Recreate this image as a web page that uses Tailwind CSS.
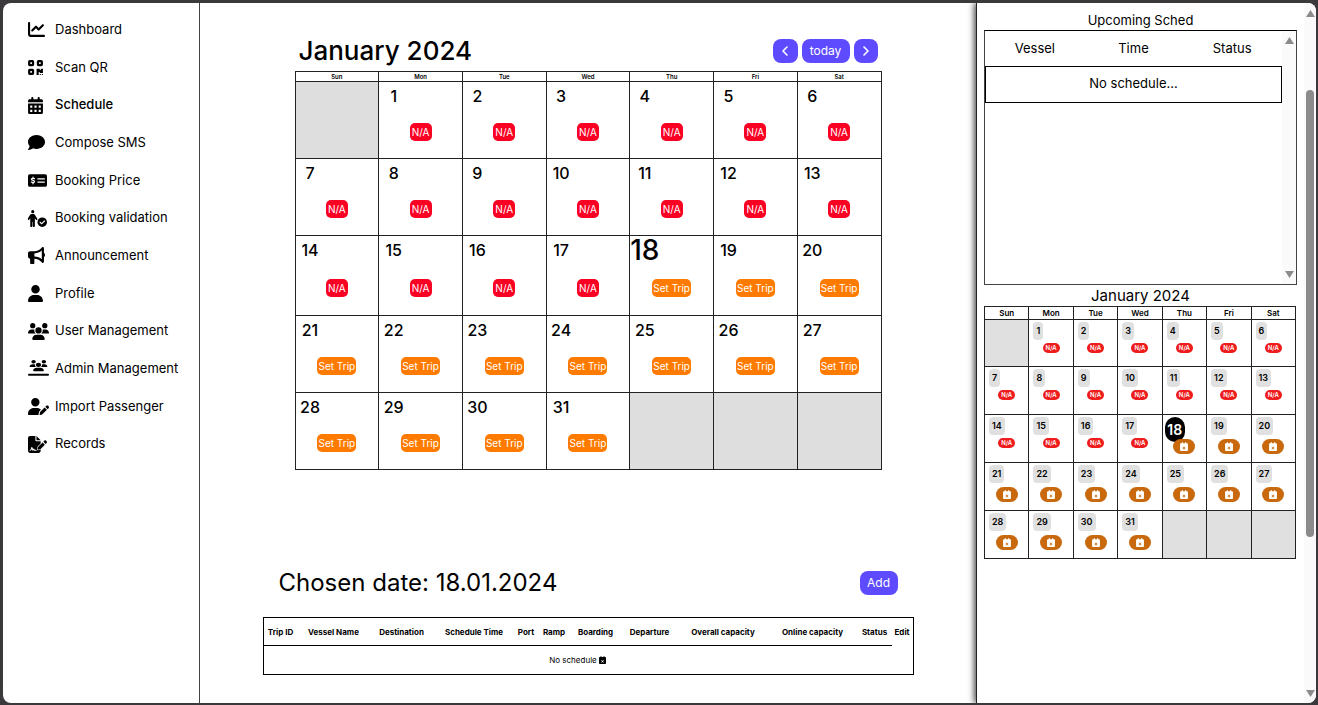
<!DOCTYPE html>
<html lang="en">
<head>
<meta charset="utf-8">
<meta name="viewport" content="width=device-width, initial-scale=1">
<title>Schedule</title>
<script src="https://cdn.jsdelivr.net/npm/@tailwindcss/browser@4"></script>
</head>
<body class="bg-[#3b393b] font-[Inter,'Noto_Sans',sans-serif] text-black">
<svg class="hidden" aria-hidden="true">
  <symbol id="cal-x" viewBox="0 0 448 512"><path fill-rule="evenodd" d="M128 0c17.700 0 32 14.300 32 32V64H288V32c0-17.700 14.300-32 32-32s32 14.300 32 32V64h48c26.500 0 48 21.500 48 48v352c0 26.500-21.500 48-48 48H48c-26.500 0-48-21.500-48-48V112C0 85.500 21.500 64 48 64H96V32c0-17.700 14.300-32 32-32zM170 260L140 290L194 344L140 398L170 428L224 374L278 428L308 398L254 344L308 290L278 260L224 314Z"/></symbol>
</svg>
<div class="flex min-h-screen flex-col pt-[3px] pr-[2px] pb-[2px] pl-[3px]">
<div class="flex grow overflow-hidden rounded-lg bg-white">

  <nav class="w-[197px] shrink-0 border-r border-[#444] pt-2 pl-[25px] text-[13px]">
    <div class="grid h-[452px] auto-rows-fr">
      <a href="#" class="flex items-center"><span class="w-[27px]"><svg class="h-[17px] w-[17px]" viewBox="0 0 512 512"><path d="M64 64c0-17.700-14.300-32-32-32S0 46.300 0 64V400c0 44.200 35.800 80 80 80H480c17.700 0 32-14.300 32-32s-14.300-32-32-32H80c-8.800 0-16-7.200-16-16V64zm406.600 86.600c12.500-12.500 12.500-32.800 0-45.300s-32.800-12.500-45.300 0L320 210.700l-57.400-57.400c-12.500-12.500-32.800-12.500-45.300 0l-112 112c-12.500 12.500-12.500 32.800 0 45.300s32.800 12.500 45.300 0L240 221.300l57.400 57.400c12.500 12.500 32.800 12.500 45.300 0l128-128z"/></svg></span>Dashboard</a>
      <a href="#" class="flex items-center"><span class="w-[27px]"><svg class="h-[17px] w-[15px]" viewBox="0 0 448 512"><g fill="none" stroke="#000" stroke-width="68"><rect x="34" y="66" width="116" height="116" rx="16"/><rect x="298" y="66" width="116" height="116" rx="16"/><rect x="34" y="330" width="116" height="116" rx="16"/></g><path d="M256 296h96v32h32v-32h64v128h-96v-32h-32v88h-64zM352 448h32v32h-32zM416 448h32v32h-32z"/></svg></span>Scan QR</a>
      <a href="#" aria-current="page" class="flex items-center font-medium"><span class="w-[27px]"><svg class="h-[17px] w-[15px]" viewBox="0 0 448 512"><path fill-rule="evenodd" d="M128 0c17.700 0 32 14.300 32 32V64H288V32c0-17.700 14.300-32 32-32s32 14.300 32 32V64h48c26.500 0 48 21.500 48 48v48H0V112C0 85.500 21.500 64 48 64H96V32c0-17.700 14.300-32 32-32zM0 192H448V464c0 26.500-21.500 48-48 48H48c-26.500 0-48-21.500-48-48V192zM64 256v64h64v-64zM192 256v64h64v-64zM320 256v64h64v-64zM64 384v64h64v-64zM192 384v64h64v-64zM320 384v64h64v-64z"/></svg></span>Schedule</a>
      <a href="#" class="flex items-center"><span class="w-[27px]"><svg class="h-[17px] w-[17px]" viewBox="0 0 512 512"><path d="M512 240c0 114.900-114.600 208-256 208c-37.100 0-72.300-6.400-104.100-17.900c-11.900 8.700-31.300 20.600-54.300 30.600C73.600 471.100 44.700 480 16 480c-6.500 0-12.300-3.900-14.800-9.900c-2.500-6-1.100-12.800 3.400-17.400l.3-.3c1.300-1.400 3.300-3.500 6.200-7.100c4.100-5 9.600-12.400 15.200-21.600c10-16.600 19.500-38.400 21.400-62.900C17.700 326.800 0 285.100 0 240C0 125.100 114.600 32 256 32s256 93.100 256 208z"/></svg></span>Compose SMS</a>
      <a href="#" class="flex items-center"><span class="w-[27px]"><svg class="h-[17px] w-[19px]" viewBox="0 0 576 512"><rect y="64" width="576" height="384" rx="56"/><g fill="none" stroke="#fff" stroke-width="38" stroke-linecap="round"><path d="M300 208h196M300 304h196"/><path d="M194 200c-24-12-88-16-90 20c-2 42 94 24 94 70c0 36-66 34-96 14M152 156v28M152 328v28"/></g></svg></span>Booking Price</a>
      <a href="#" class="flex items-center"><span class="w-[27px]"><svg class="h-[17px] w-[19px]" viewBox="0 0 576 512"><circle cx="144" cy="48" r="48"/><path d="M144 120c42 0 60 12 78 42l60 98c10 18 4 32-8 40s-30 6-40-10l-26-42v232c0 18-12 32-30 32s-32-14-32-32V352h-14v128c0 18-14 32-32 32s-32-14-32-32V248l-26 42c-10 14-26 18-40 10s-18-26-8-42l56-94c20-32 44-44 94-44z"/><circle cx="432" cy="368" r="144"/><path d="M368 370l46 46 84-84" fill="none" stroke="#fff" stroke-width="34" stroke-linecap="round"/></svg></span>Booking validation</a>
      <a href="#" class="flex items-center"><span class="w-[27px]"><svg class="h-[17px] w-[17px]" viewBox="0 0 512 512"><path d="M480 32c0-12.900-7.800-24.600-19.800-29.600s-25.700-2.200-34.900 6.900L381.700 53c-48 48-113.100 75-181 75H192 160 64c-35.300 0-64 28.700-64 64v96c0 35.300 28.700 64 64 64l0 128c0 17.700 14.300 32 32 32h64c17.700 0 32-14.300 32-32V352l8.700 0c67.900 0 133 27 181 75l43.600 43.600c9.200 9.200 22.900 11.900 34.900 6.900s19.800-16.600 19.800-29.600V300.400c18.600-8.800 32-32.500 32-60.400s-13.400-51.600-32-60.400V32zm-64 76.700V240 371.300C357.200 317.800 280.500 288 200.700 288H192V192h8.700c79.800 0 156.500-29.800 215.300-83.300z"/></svg></span>Announcement</a>
      <a href="#" class="flex items-center"><span class="w-[27px]"><svg class="h-[17px] w-[15px]" viewBox="0 0 448 512"><path d="M224 256A128 128 0 1 0 224 0a128 128 0 1 0 0 256zm-45.700 48C79.800 304 0 383.800 0 482.300C0 498.700 13.300 512 29.700 512H418.300c16.400 0 29.700-13.300 29.700-29.700C448 383.800 368.200 304 269.700 304H178.300z"/></svg></span>Profile</a>
      <a href="#" class="flex items-center"><span class="w-[27px]"><svg class="h-[17px] w-[21px]" viewBox="0 0 640 512"><path id="people" d="M144 0a80 80 0 1 1 0 160A80 80 0 1 1 144 0zM512 0a80 80 0 1 1 0 160A80 80 0 1 1 512 0zM0 298.700C0 239.800 47.800 192 106.700 192h42.700c15.900 0 31 3.500 44.600 9.700c-1.300 7.200-1.900 14.700-1.900 22.300c0 38.200 16.800 72.500 43.300 96H21.300C9.600 320 0 310.400 0 298.700zM405.300 320c26-23.500 42.700-57.800 42.700-96c0-7.600-.7-15-1.900-22.300c13.600-6.300 28.700-9.700 44.600-9.700h42.700C592.200 192 640 239.800 640 298.700c0 11.800-9.600 21.300-21.300 21.300H405.300zM224 224a96 96 0 1 1 192 0 96 96 0 1 1 -192 0zM128 485.300C128 411.700 187.700 352 261.300 352H378.700C452.300 352 512 411.700 512 485.300c0 14.700-11.900 26.700-26.700 26.700H154.700c-14.700 0-26.700-11.900-26.700-26.700z"/></svg></span>User Management</a>
      <a href="#" class="flex items-center"><span class="w-[27px]"><svg class="h-[17px] w-[21px]" viewBox="0 0 640 512"><use href="#people" transform="translate(48 0) scale(.85 .66)"/><rect y="416" width="640" height="60" rx="30"/></svg></span>Admin Management</a>
      <a href="#" class="flex items-center"><span class="w-[27px]"><svg class="h-[17px] w-[21px]" viewBox="0 0 640 512"><path d="M224 256A128 128 0 1 0 224 0a128 128 0 1 0 0 256zm-45.700 48C79.800 304 0 383.800 0 482.300C0 498.700 13.300 512 29.700 512H322.800c-3.100-8.800-3.700-18.400-1.400-27.800l15-60.100c2.800-11.300 8.600-21.500 16.800-29.700l40.300-40.300c-32.100-31-75.700-50.100-123.900-50.100H178.300zm435.500-68.300c-15.600-15.600-40.900-15.600-56.600 0l-29.400 29.400 71 71 29.400-29.400c15.600-15.600 15.600-40.900 0-56.600l-14.400-14.400zM375.900 417c-4.100 4.100-7 9.200-8.400 14.900l-15 60.100c-1.400 5.500 .2 11.200 4.200 15.200s9.700 5.600 15.200 4.200l60.100-15c5.600-1.400 10.800-4.300 14.900-8.400L576.100 358.700l-71-71L375.900 417z"/></svg></span>Import Passenger</a>
      <a href="#" class="flex items-center"><span class="w-[27px]"><svg class="h-[17px] w-[19px]" viewBox="0 0 576 512"><path d="M64 0C28.700 0 0 28.700 0 64V448c0 35.300 28.700 64 64 64H320c35.300 0 64-28.700 64-64V160H256c-17.700 0-32-14.300-32-32V0zM256 0V128H384z"/><path d="M64 432c22 0 28-8 36-34l16-50 34 84 24-38 22 38h50" fill="none" stroke="#fff" stroke-width="32" stroke-linecap="round" stroke-linejoin="round"/><path d="M549.800 139.700l14.400 14.400c15.600 15.600 15.600 40.900 0 56.600l-29.400 29.400-71-71 29.400-29.400c15.600-15.600 40.900-15.600 56.600 0zM311.900 321L441.100 191.800l71 71L382.900 391.900c-4.100 4.100-9.200 7-14.900 8.400l-60.100 15c-5.500 1.400-11.200-.2-15.200-4.200s-5.600-9.700-4.200-15.200l15-60.100c1.400-5.600 4.300-10.800 8.400-14.900z" stroke="#fff" stroke-width="32" paint-order="stroke"/></svg></span>Records</a>
    </div>
  </nav>

  <main class="min-w-0 flex-1 pt-9">
    <section class="mx-auto w-full max-w-[587px]">
      <div class="flex h-8 items-center justify-between px-1 pb-2">
        <h1 class="text-[26px] leading-8 font-medium">January 2024</h1>
        <div class="flex gap-1 text-[12px] text-white">
          <button aria-label="Previous month" class="flex h-6 w-[25px] items-center justify-center rounded-lg bg-[#5e4bff]"><svg class="h-[10px] w-[6px]" viewBox="0 0 6 10" fill="none" stroke="currentColor" stroke-width="1.600" stroke-linecap="round" stroke-linejoin="round"><path d="M5 1L1 5l4 4"/></svg></button>
          <button class="h-6 w-12 rounded-lg bg-[#5e4bff]">today</button>
          <button aria-label="Next month" class="flex h-6 w-[24px] items-center justify-center rounded-lg bg-[#5e4bff]"><svg class="h-[10px] w-[6px]" viewBox="0 0 6 10" fill="none" stroke="currentColor" stroke-width="1.600" stroke-linecap="round" stroke-linejoin="round"><path d="M1 1l4 4-4 4"/></svg></button>
        </div>
      </div>
      <table id="month" class="w-full table-fixed border-collapse"></table>
    </section>

    <section class="mx-auto mt-[97px] w-full max-w-[651px]">
      <div class="flex items-center justify-between px-4">
        <h2 class="text-[24px] leading-8">Chosen date: 18.01.2024</h2>
        <button class="h-6 w-[38px] rounded-lg bg-[#5e4bff] text-[12px] text-white">Add</button>
      </div>
      <table class="mt-[18px] w-full table-fixed border-separate border-spacing-0 border border-black text-center text-[8px] whitespace-nowrap">
        <colgroup><col class="w-[34px]"><col class="w-[72px]"><col class="w-[64px]"><col class="w-[81px]"><col class="w-[23px]"><col class="w-[33px]"><col class="w-[50px]"><col class="w-[58px]"><col class="w-[89px]"><col class="w-[90px]"><col class="w-[34px]"><col></colgroup>
        <thead><tr class="h-7 font-semibold">
          <th class="border-b border-black">Trip ID</th><th class="border-b border-black">Vessel Name</th><th class="border-b border-black">Destination</th><th class="border-b border-black">Schedule Time</th><th class="border-b border-black">Port</th><th class="border-b border-black">Ramp</th><th class="border-b border-black">Boarding</th><th class="border-b border-black">Departure</th><th class="border-b border-black">Overall capacity</th><th class="border-b border-black">Online capacity</th><th class="border-b border-black">Status</th><th>Edit</th>
        </tr></thead>
        <tbody><tr class="h-7"><td colspan="11"><span class="inline-flex items-center gap-[2px]">No schedule <svg class="h-2 w-[7px]"><use href="#cal-x"/></svg></span></td><td></td></tr></tbody>
      </table>
    </section>
  </main>

  <aside class="flex w-[340px] shrink-0 border-l border-[#222] shadow-[-2px_0_6px_0px_rgba(0,0,0,0.7)]">
    <div class="min-w-0 flex-1 pt-2 pl-[7px]">
      <div class="w-[313px]">
        <h2 class="text-center text-[13px] leading-[19px]">Upcoming Sched</h2>
        <div class="flex h-[255px] border border-[#444] border-t-black">
          <div class="flex-1">
            <table class="w-full table-fixed border-collapse text-center text-[13px]">
              <thead><tr class="h-[35px]"><th class="font-normal">Vessel</th><th class="font-normal">Time</th><th class="font-normal">Status</th></tr></thead>
              <tbody><tr class="h-[36px]"><td colspan="3" class="border border-black">No schedule...</td></tr></tbody>
            </table>
          </div>
          <div class="flex w-[14px] flex-col items-center justify-between bg-[#fafafa] py-[6px]">
            <svg class="h-[7px] w-[9px]" viewBox="0 0 9 7" fill="#8b8b8b"><path d="M4.500 0L9 7H0z"/></svg>
            <svg class="h-[7px] w-[9px]" viewBox="0 0 9 7" fill="#8b8b8b"><path d="M4.500 7L9 0H0z"/></svg>
          </div>
        </div>
        <h2 class="text-center text-[15px] leading-[21px]">January 2024</h2>
        <div class="pr-px"><table id="mini" class="w-full table-fixed border-collapse"></table></div>
      </div>
    </div>
    <div class="flex w-[12px] flex-col items-center bg-[#fafafa] pt-[7px] pb-[6px]">
      <svg class="h-[7px] w-[9px]" viewBox="0 0 9 7" fill="#8b8b8b"><path d="M4.500 0L9 7H0z"/></svg>
      <div class="mt-[73px] h-[447px] w-2 rounded-full bg-[#8b8b8b]"></div>
      <svg class="mt-auto h-[7px] w-[9px]" viewBox="0 0 9 7" fill="#8b8b8b"><path d="M4.500 7L9 0H0z"/></svg>
    </div>
  </aside>
</div>
</div>

<script>
const names = ['Sun', 'Mon', 'Tue', 'Wed', 'Thu', 'Fri', 'Sat'];
const today = 18;
const weeks = [0, 1, 2, 3, 4].map(w => names.map((_, d) => w * 7 + d));

function monthCell(n, w) {
  if (n < 1 || n > 31) return '<td class="border border-[#222] bg-[#dedede]"></td>';
  const size = n === today ? 'text-[28px]' : 'text-[16px]';
  const gap = w === 2 ? 'mt-[15px]' : 'mt-[13px]';
  const badge = n < today
    ? `<span class="${gap} h-[18px] w-[22px] rounded-[5px] bg-[#fa0023] text-center text-[10px] leading-[18px] text-white">N/A</span>`
    : `<button class="${gap} h-[18px] w-[39px] rounded-[5px] bg-[#ff7b00] text-[10px] leading-[18px] whitespace-nowrap text-white">Set Trip</button>`;
  return `<td class="border border-[#222] p-0 align-top"><div class="flex flex-col items-center"><div class="flex h-[28px] w-[29px] items-center justify-center self-start font-medium ${size}">${n}</div>${badge}</div></td>`;
}
document.getElementById('month').innerHTML =
  '<thead><tr class="h-[10px]">' + names.map(d => `<th class="border border-[#222] p-0 text-[6px] leading-[9px] font-semibold">${d}</th>`).join('') + '</tr></thead><tbody>' +
  weeks.map((row, w) => `<tr class="${w === 2 ? 'h-[80px]' : 'h-[77px]'}">` + row.map(n => monthCell(n, w)).join('') + '</tr>').join('') + '</tbody>';

function miniCell(n) {
  if (n < 1 || n > 31) return '<td class="border border-[#222] bg-[#e0e0e0]"></td>';
  const chip = n === today
    ? '<div class="ml-[2px] mt-[2px] -mb-[4px] flex h-[25px] w-5 items-center justify-center self-start rounded-full bg-black text-[14px] font-semibold text-white">18</div>'
    : `<div class="ml-1 mt-[2px] h-[18px] self-start rounded-[4px] bg-[#e0e0e0] px-[3px] text-[9px] leading-[18px] font-semibold">${n}</div>`;
  const badge = n < today
    ? '<span class="mt-[3px] h-[10px] w-[17px] rounded-[5px] bg-[#ee1c1c] text-center text-[6px] leading-[10px] font-semibold text-white">N/A</span>'
    : '<button aria-label="Set trip" class="relative mt-1 flex h-[15px] w-[22px] items-center justify-center rounded-full bg-[#c9690d] text-white"><svg class="h-[9px] w-2 fill-current"><use href="#cal-x"/></svg></button>';
  return `<td class="border border-[#222] p-0 align-top"><div class="flex flex-col items-center">${chip}${n === today ? badge.replace('mt-1', 'mt-[1px]') : badge}</div></td>`;
}
document.getElementById('mini').innerHTML =
  '<thead><tr class="h-[13px]">' + names.map(d => `<th class="border border-[#222] p-0 text-[8px] leading-[12px] font-semibold">${d}</th>`).join('') + '</tr></thead><tbody>' +
  weeks.map((row, w) => `<tr class="${w === 0 ? 'h-[47px]' : 'h-[48px]'}">` + row.map(miniCell).join('') + '</tr>').join('') + '</tbody>';
</script>
</body>
</html>
